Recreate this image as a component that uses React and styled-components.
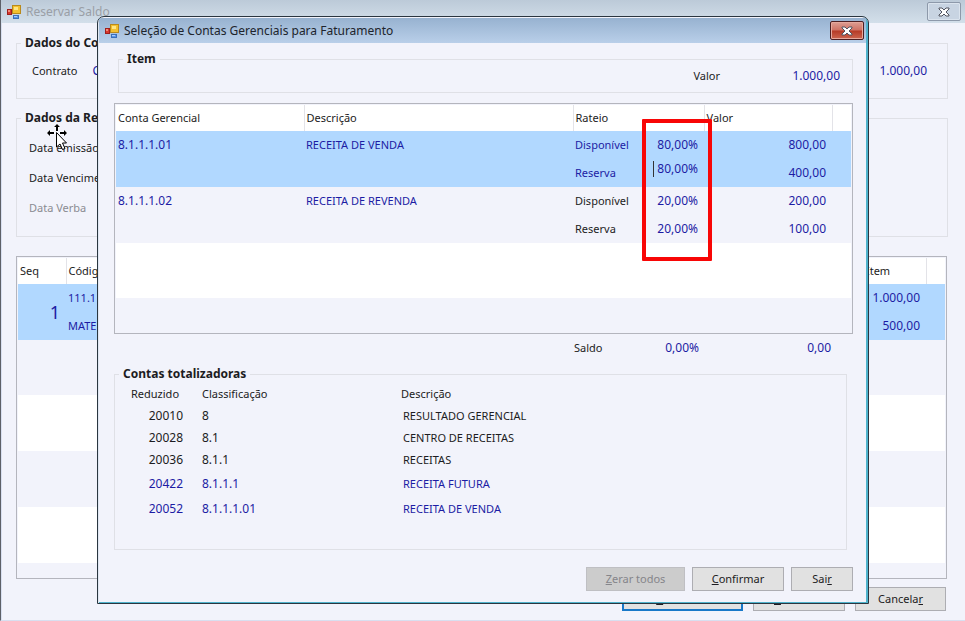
import React, { useState } from 'react'
import styled, { createGlobalStyle, css } from 'styled-components'

const GlobalStyle = createGlobalStyle`
  * {
    box-sizing: border-box;
  }

  body {
    margin: 0;
    background: #f2f3fb;
    color: #1c1c22;
    font-family: 'Noto Sans', 'DejaVu Sans', sans-serif;
    font-size: 11px;
    line-height: 16px;
  }

  button, input {
    font: inherit;
    color: inherit;
  }
`

const blue = '#1c1ca4'
const line = '#dfe0e6'

const Desktop = styled.div`
  position: relative;
`

const MainWindow = styled.main`
  display: flex;
  flex-direction: column;
  min-height: 100vh;
  overflow: hidden;
  border-left: 1px solid #5d6068;
  border-bottom: 1px solid #d8dff0;
  box-shadow: inset 1px 0 #d8dff0;
`

const TitleBar = styled.header`
  display: flex;
  align-items: center;
  gap: 4px;
  height: ${props => props.$active ? 25 : 23}px;
  padding: 0 ${props => props.$active ? 2 : 4}px 0 5px;
  color: ${props => props.$active ? '#20242c' : '#9a9fa6'};
  background: ${props => props.$active
    ? 'linear-gradient(#97b2d0, #b9cfe9)'
    : 'linear-gradient(#bccad8, #d3dfea)'};
`

const Title = styled.h1`
  flex: 1;
  margin: 0;
  font-size: 12px;
  font-weight: 400;
`

const CloseButton = styled.button`
  display: flex;
  align-items: center;
  justify-content: center;
  width: 34px;
  height: 19px;
  padding: 0;
  border: 1px solid #8d99aa;
  border-radius: 2px;
  background: #c8d4e2;
  box-shadow: inset 0 0 0 1px #dbe4ee;

  ${props => props.$active && css`
    border-color: #4c1f22;
    background: linear-gradient(#dd9f94, #cf7163 48%, #b53a26 52%, #cc6650);
    box-shadow: inset 0 0 0 1px #e6a89c;
  `}
`

const MainBody = styled.div`
  display: flex;
  flex: 1;
  flex-direction: column;
  padding: 11px 17px 9px 15px;
`

const Group = styled.fieldset`
  min-width: 0;
  margin: 0;
  padding: 0 4px;
  border: 1px solid ${line};
`

const Legend = styled.legend`
  padding: 0 4px;
  font-size: 12px;
  font-weight: 700;
  line-height: 18px;
`

const ContractGroup = styled(Group)`
  height: 65px;
  margin-bottom: 10px;
`

const ReserveGroup = styled(Group)`
  height: 128px;
  margin-bottom: 19px;
`

const ContractRow = styled.div`
  display: flex;
  gap: 15px;
  padding: 11px 16px 0 11px;
`

const Amount = styled.span`
  color: ${blue};
  font-size: 12px;
  text-align: right;
  ${props => props.$push && 'margin-left: auto;'}
`

const FieldRow = styled.div`
  padding: 7px 8px;
  color: ${props => props.$muted ? '#8b8c92' : 'inherit'};

  &:first-of-type {
    padding-top: 13px;
  }
`

const GridBox = styled.div`
  position: relative;
  flex: ${props => props.$grow ? '1 0 0' : 'none'};
  height: ${props => props.$grow ? 'auto' : '231px'};
  margin-right: ${props => props.$grow ? 1 : 0}px;
  padding: 1px;
  overflow: ${props => props.$grow ? 'hidden' : 'visible'};
  border: 1px solid #b4b5bd;
  background:
    linear-gradient(#fff 26px, transparent 26px),
    repeating-linear-gradient(#fff 0 56px, #f2f3fb 56px 112px);
  background-position: 0 0, 0 26px;
  background-clip: content-box;
  background-color: #fff;
  background-repeat: no-repeat;
`

const Grid = styled.table`
  width: 100%;
  table-layout: fixed;
  border-collapse: collapse;
`

const HeadCell = styled.th`
  height: 26px;
  padding: 0 2px;
  border-right: 1px solid #e3e3e8;
  font-weight: 400;
  text-align: left;
  white-space: nowrap;

  &:last-child {
    border-right: 0;
  }
`

const GridRow = styled.tr`
  height: 56px;
  background: ${props => props.$selected ? '#b1d8ff' : '#f2f3fb'};
`

const Cell = styled.td`
  padding: 0 ${props => props.$right ? 6 : 2}px 0 2px;
  color: ${props => props.$plain ? 'inherit' : blue};
  font-size: ${props => props.$number ? 12 : 11}px;
  line-height: 28px;
  text-align: ${props => props.$right ? 'right' : 'left'};
  vertical-align: top;
  white-space: nowrap;
`

const Sequence = styled.td`
  padding: 0 6px 0 0;
  color: ${blue};
  font-size: 18px;
  text-align: right;
`

const Line = styled.div`
  height: 28px;
`

const PercentInput = styled.input`
  display: block;
  width: 45px;
  height: 16px;
  margin: 2px 0 0 auto;
  padding: 0;
  border: 0;
  border-left: 1px solid #333;
  outline: 0;
  background: transparent;
  line-height: 16px;
  text-align: right;
`

const MainActions = styled.footer`
  display: flex;
  justify-content: flex-end;
  gap: 10px;
  padding: 8px 2px 0 0;
`

const Button = styled.button`
  width: ${props => props.$width}px;
  height: 24px;
  padding: 0;
  border: 1px solid #adadb2;
  background: #e1e1e1;

  &:disabled {
    border-color: #bfbfc3;
    background: #cccccc;
    color: #85858a;
  }

  ${props => props.$default && css`
    border: 2px solid #1878c8;
  `}
`

const Dialog = styled.section`
  position: absolute;
  top: 16px;
  right: 96px;
  left: 97px;
  overflow: hidden;
  border: 1px solid #2a3640;
  border-radius: 7px 7px 0 0;
  background: #f2f3fb;
  box-shadow: inset 1px 0 #dfe7f2, inset -2px -1px #4fb3cc;
  padding: 1px 2px 1px 1px;
`

const DialogBody = styled.div`
  padding: 7px 13px 11px 15px;
`

const ItemGroup = styled(Group)`
  height: 43px;
  margin: 0 0 10px 4px;
`

const ItemRow = styled.div`
  display: flex;
  justify-content: flex-end;
  align-items: center;
  padding: 0 8px 0 0;

  ${Amount} {
    width: 120px;
  }
`

const Highlight = styled.div`
  position: absolute;
  top: 15px;
  right: 140px;
  width: 70px;
  height: 142px;
  border: 4px solid #f80606;
  border-radius: 1px;
  pointer-events: none;
`

const BalanceRow = styled.div`
  display: grid;
  grid-template-columns: 60px 65px 132px;
  justify-content: end;
  margin-bottom: 9px;
  padding: 6px 22px 0 0;
`

const TotalsGroup = styled(Group)`
  height: 185px;
  margin-right: 6px;
`

const Totals = styled.table`
  width: 100%;
  table-layout: fixed;
  border-collapse: collapse;
`

const TotalsHead = styled.th`
  height: 22px;
  padding: 0 0 0 ${props => props.$indent || 0}px;
  font-weight: 400;
  text-align: left;
`

const TotalsRow = styled.tr`
  height: ${props => props.$current ? 25 : 22}px;
  color: ${props => props.$current ? blue : 'inherit'};
`

const TotalsCell = styled.td`
  padding: 0 ${props => props.$right ? 19 : 0}px 0 ${props => props.$indent || 0}px;
  font-size: ${props => props.$number ? 12 : 11}px;
  text-align: ${props => props.$right ? 'right' : 'left'};
`

const DialogActions = styled.footer`
  display: flex;
  justify-content: flex-end;
  gap: 7px;
  padding-top: 17px;
`

const Pointer = styled.svg`
  position: absolute;
  top: 124px;
  left: 47px;
  width: 20px;
  height: 27px;
`

const FormIcon = () => (
  <svg width="16" height="16" viewBox="0 0 16 16" aria-hidden="true">
    <rect x="6.500" y="1.500" width="8" height="8" fill="#f3c02f" stroke="#b98a1c" />
    <rect x="8" y="3" width="4" height="3" fill="#ffe684" />
    <rect x="1.500" y="5.500" width="4" height="5" fill="#d8382c" stroke="#a01f1c" />
    <rect x="2" y="6" width="2" height="2" fill="#f48b78" />
    <rect x="7.500" y="11.500" width="5" height="3" fill="#5c97e6" stroke="#3d70b8" />
    <rect x="8" y="12" width="3" height="1" fill="#a7ccff" />
  </svg>
)

const CloseIcon = () => (
  <svg width="12" height="10" viewBox="0 0 12 10" aria-hidden="true">
    <path d="M1 1h3l2 2 2-2h3v1L8 5l3 3v1H8L6 7 4 9H1V8l3-3-3-3z" fill="#fff" stroke="#505460" strokeLinejoin="round" />
  </svg>
)

const accounts = [
  { code: '8.1.1.1.01', name: 'RECEITA DE VENDA', percent: '80,00%', available: '800,00', reserved: '400,00' },
  { code: '8.1.1.1.02', name: 'RECEITA DE REVENDA', percent: '20,00%', available: '200,00', reserved: '100,00' }
]

const totals = [
  { id: '20010', code: '8', name: 'RESULTADO GERENCIAL' },
  { id: '20028', code: '8.1', name: 'CENTRO DE RECEITAS' },
  { id: '20036', code: '8.1.1', name: 'RECEITAS' },
  { id: '20422', code: '8.1.1.1', name: 'RECEITA FUTURA', current: true },
  { id: '20052', code: '8.1.1.1.01', name: 'RECEITA DE VENDA', current: true }
]

const ReserveWindow = () => (
  <MainWindow>
    <TitleBar>
      <FormIcon />
      <Title>Reservar Saldo</Title>
      <CloseButton aria-label="Fechar"><CloseIcon /></CloseButton>
    </TitleBar>
    <MainBody>
      <ContractGroup>
        <Legend>Dados do Contrato</Legend>
        <ContractRow>
          <span>Contrato</span>
          <Amount>C</Amount>
          <Amount $push>1.000,00</Amount>
        </ContractRow>
      </ContractGroup>
      <ReserveGroup>
        <Legend>Dados da Reserva</Legend>
        <FieldRow>Data emissão</FieldRow>
        <FieldRow>Data Vencimento</FieldRow>
        <FieldRow $muted>Data Verba</FieldRow>
      </ReserveGroup>
      <GridBox $grow>
        <Grid>
          <colgroup>
            <col width="48" />
            <col />
            <col width="92" />
            <col width="19" />
          </colgroup>
          <thead>
            <tr>
              <HeadCell>Seq</HeadCell>
              <HeadCell>Código</HeadCell>
              <HeadCell>Valor Item</HeadCell>
              <HeadCell />
            </tr>
          </thead>
          <tbody>
            <GridRow $selected>
              <Sequence>1</Sequence>
              <Cell>
                <Line>111.1</Line>
                <Line>MATERIAL</Line>
              </Cell>
              <Cell $right $number>
                <Line>1.000,00</Line>
                <Line>500,00</Line>
              </Cell>
              <Cell />
            </GridRow>
          </tbody>
        </Grid>
      </GridBox>
      <MainActions>
        <Button $width={121} $default><u>C</u>onfirmar</Button>
        <Button $width={92}><u>C</u>onsultar</Button>
        <Button $width={91}>Cancela<u>r</u></Button>
      </MainActions>
    </MainBody>
  </MainWindow>
)

const AccountRow = ({ account, selected }) => {
  const [percent, setPercent] = useState(account.percent)

  return (
    <GridRow $selected={selected}>
      <Cell $number>{account.code}</Cell>
      <Cell>{account.name}</Cell>
      <Cell $plain={!selected}>
        <Line>Disponível</Line>
        <Line>Reserva</Line>
      </Cell>
      <Cell $right $number>
        <Line>{account.percent}</Line>
        {selected
          ? <PercentInput
            aria-label="Reserva"
            value={percent}
            onChange={event => setPercent(event.target.value)} />
          : <Line>{percent}</Line>}
      </Cell>
      <Cell $right $number>
        <Line>{account.available}</Line>
        <Line>{account.reserved}</Line>
      </Cell>
      <Cell />
    </GridRow>
  )
}

const AccountsDialog = () => (
  <Dialog role="dialog" aria-labelledby="dialog-title">
    <TitleBar $active>
      <FormIcon />
      <Title id="dialog-title">Seleção de Contas Gerenciais para Faturamento</Title>
      <CloseButton $active aria-label="Fechar"><CloseIcon /></CloseButton>
    </TitleBar>
    <DialogBody>
      <ItemGroup>
        <Legend>Item</Legend>
        <ItemRow>
          <span>Valor</span>
          <Amount>1.000,00</Amount>
        </ItemRow>
      </ItemGroup>
      <GridBox>
        <Grid>
          <colgroup>
            <col width="188" />
            <col />
            <col width="66" />
            <col width="65" />
            <col width="128" />
            <col width="19" />
          </colgroup>
          <thead>
            <tr>
              <HeadCell>Conta Gerencial</HeadCell>
              <HeadCell>Descrição</HeadCell>
              <HeadCell colSpan="2">Rateio</HeadCell>
              <HeadCell>Valor</HeadCell>
              <HeadCell />
            </tr>
          </thead>
          <tbody>
            {accounts.map((account, index) => (
              <AccountRow key={account.code} account={account} selected={index === 0} />
            ))}
          </tbody>
        </Grid>
        <Highlight />
      </GridBox>
      <BalanceRow>
        <span>Saldo</span>
        <Amount>0,00%</Amount>
        <Amount>0,00</Amount>
      </BalanceRow>
      <TotalsGroup>
        <Legend>Contas totalizadoras</Legend>
        <Totals>
          <colgroup>
            <col width="83" />
            <col width="199" />
            <col />
          </colgroup>
          <thead>
            <tr>
              <TotalsHead $indent={12}>Reduzido</TotalsHead>
              <TotalsHead>Classificação</TotalsHead>
              <TotalsHead>Descrição</TotalsHead>
            </tr>
          </thead>
          <tbody>
            {totals.map(total => (
              <TotalsRow key={total.id} $current={total.current}>
                <TotalsCell $right $number>{total.id}</TotalsCell>
                <TotalsCell $number>{total.code}</TotalsCell>
                <TotalsCell $indent={2}>{total.name}</TotalsCell>
              </TotalsRow>
            ))}
          </tbody>
        </Totals>
      </TotalsGroup>
      <DialogActions>
        <Button $width={99} disabled><u>Z</u>erar todos</Button>
        <Button $width={92}><u>C</u>onfirmar</Button>
        <Button $width={62}>Sai<u>r</u></Button>
      </DialogActions>
    </DialogBody>
  </Dialog>
)

const App = () => (
  <Desktop>
    <GlobalStyle />
    <ReserveWindow />
    <Pointer viewBox="0 0 20 27" aria-hidden="true">
      <path d="M10 0l3 3h-2v4H9V3H7zM0 9l3-3v2h4v2H3v2zM20 9l-3-3v2h-4v2h4v2zM9 13h2v3H9z" fill="#000" stroke="#fff" strokeWidth="1" paintOrder="stroke" />
      <path d="M9.500 8.500v14.500l3.500-3 2.500 5.500 2.500-1-2.500-5.500h4z" fill="#fff" stroke="#000" />
    </Pointer>
    <AccountsDialog />
  </Desktop>
)

export default App
